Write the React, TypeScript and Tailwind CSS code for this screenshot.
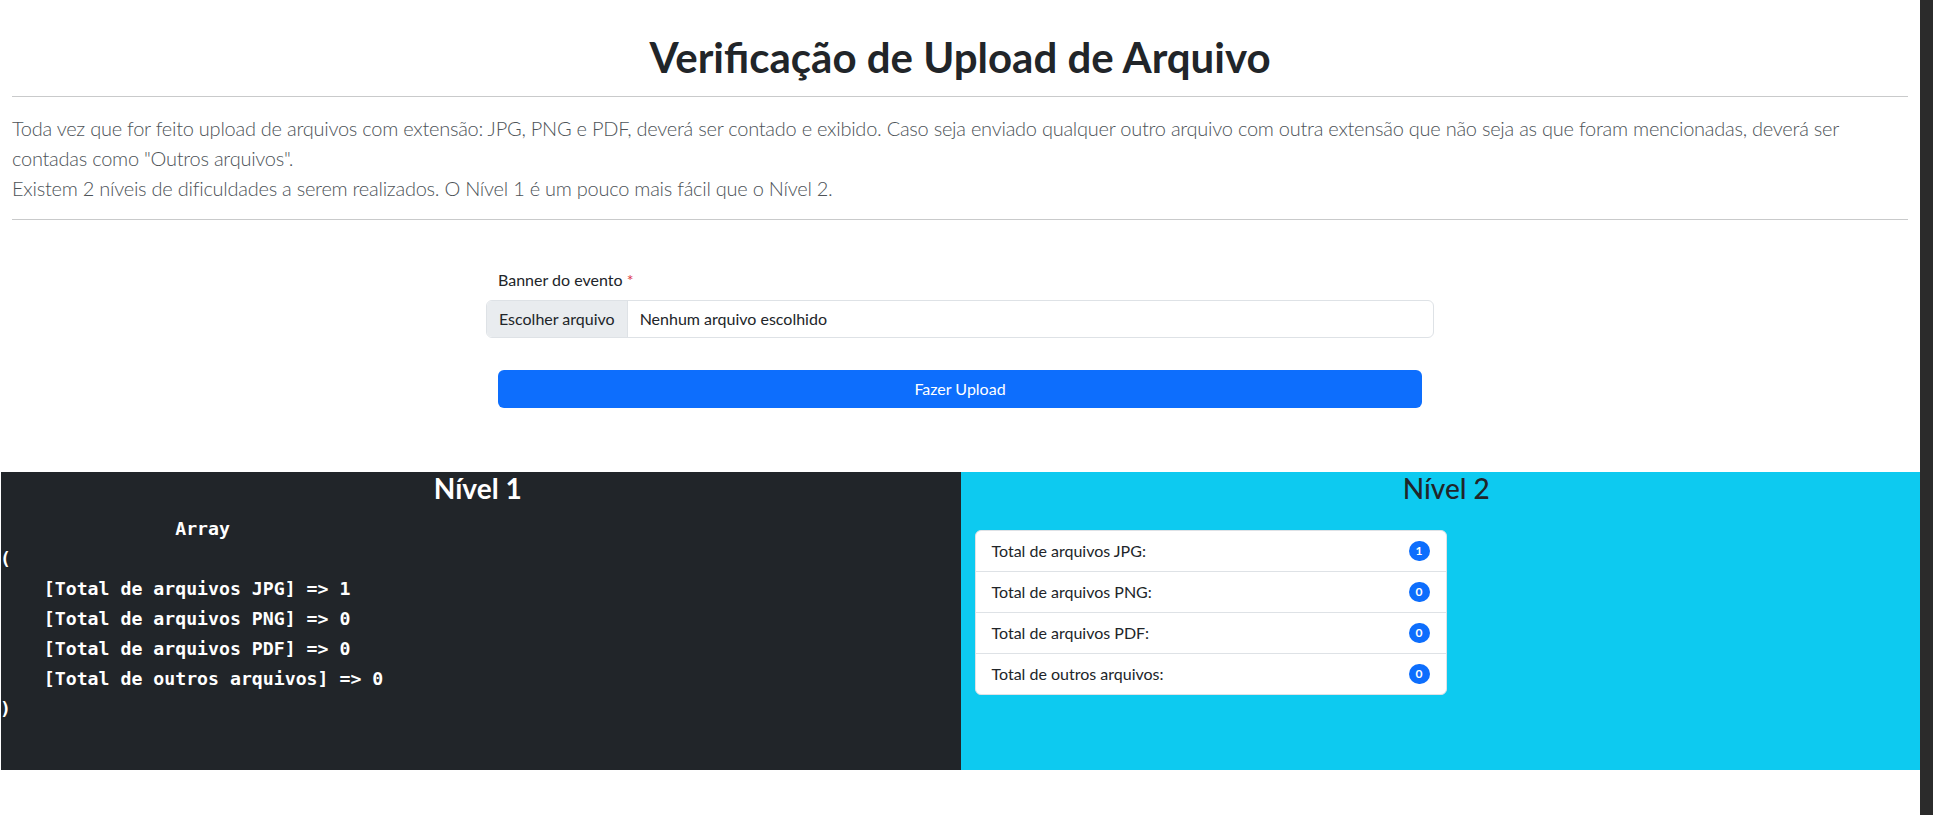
import React from 'react';

const counts = [
  { label: 'Total de arquivos JPG:', value: 1 },
  { label: 'Total de arquivos PNG:', value: 0 },
  { label: 'Total de arquivos PDF:', value: 0 },
  { label: 'Total de outros arquivos:', value: 0 },
];

const printR = `                Array
(
    [Total de arquivos JPG] => 1
    [Total de arquivos PNG] => 0
    [Total de arquivos PDF] => 0
    [Total de outros arquivos] => 0
)`;

export default function App() {
  return (
    <div className="flex min-h-[815px] bg-white text-[#212529] font-['Lato','Noto_Sans',sans-serif]">
      <div className="min-w-0 flex-1">
        {/* cabeçalho */}
        <div className="px-3 pt-[33px]">
          <h1 className="mb-[15px] text-center text-[42px] font-bold leading-[48px]">
            Verificação de Upload de Arquivo
          </h1>
          <hr className="border-0 border-t border-[#c9cacb]" />
          <p className="my-4 whitespace-nowrap text-[20px] font-light leading-[30px] tracking-[-0.25px] text-[#4d5358]">
            Toda vez que for feito upload de arquivos com extensão: JPG, PNG e PDF, deverá ser contado e exibido. Caso seja enviado qualquer outro arquivo com outra extensão que não seja as que foram mencionadas, deverá ser
            <br />
            contadas como "Outros arquivos".
            <br />
            Existem 2 níveis de dificuldades a serem realizados. O Nível 1 é um pouco mais fácil que o Nível 2.
          </p>
          <hr className="border-0 border-t border-[#c9cacb]" />
        </div>

        {/* formulário */}
        <form className="mx-auto mt-12 w-[948px]" onSubmit={(e) => e.preventDefault()}>
          <label className="mb-2 block pl-3 text-[16px] leading-6">
            Banner do evento <span className="text-[#dc3545]">*</span>
          </label>
          <div className="flex h-[38px] items-stretch overflow-hidden rounded-[6px] border border-[#dee2e6] text-[16px]">
            <span className="flex items-center border-r border-[#dee2e6] bg-[#e9ecef] px-3">Escolher arquivo</span>
            <span className="flex items-center pl-3">Nenhum arquivo escolhido</span>
          </div>
          <div className="mx-3 mt-8">
            <button
              type="submit"
              className="h-[38px] w-full rounded-[6px] bg-[#0d6efd] text-[16px] text-white"
            >
              Fazer Upload
            </button>
          </div>
        </form>

        {/* níveis */}
        <div className="mt-16 flex">
          <div className="ml-px flex-1 bg-[#212529] pb-[46px] text-white">
            <h3 className="mb-2 pr-[6px] text-center text-[28px] font-bold leading-[33.6px]">Nível 1</h3>
            <pre className="-ml-px m-0 whitespace-pre font-['DejaVu_Sans_Mono','Liberation_Mono',monospace] text-[18.2px] font-bold leading-[30px]">
              {printR}
            </pre>
          </div>
          <div className="flex-1 bg-[#0dcaf0]">
            <h3 className="mb-2 pl-[12px] text-center text-[28px] font-medium leading-[33.6px]">Nível 2</h3>
            <ul className="ml-[14px] mt-6 w-[472px] overflow-hidden rounded-[6px] border border-[#dee2e6] bg-white">
              {counts.map((c, i) => (
                <li
                  key={c.label}
                  className={`flex items-center justify-between px-4 py-2 text-[16px] leading-6 ${
                    i < counts.length - 1 ? 'border-b border-[#dee2e6]' : ''
                  }`}
                >
                  <span>{c.label}</span>
                  <span className="rounded-full bg-[#0d6efd] px-[7px] py-[4px] text-[12px] font-bold leading-3 text-white">
                    {c.value}
                  </span>
                </li>
              ))}
            </ul>
          </div>
        </div>
      </div>
      <div className="w-[13px] shrink-0 bg-[#2b2b2b]" />
    </div>
  );
}
